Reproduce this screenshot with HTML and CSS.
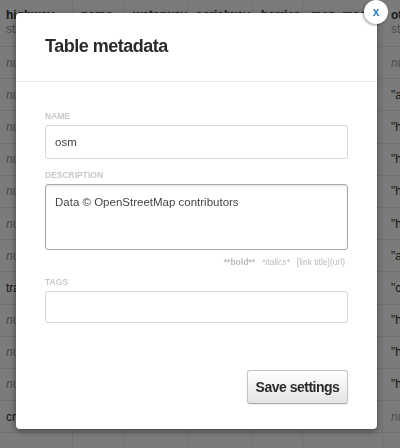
FILE: index.html
```html
<!DOCTYPE html>
<html>
<head>
<meta charset="utf-8">
<link rel="stylesheet" href="styles.css">
</head>
<body>
<div class="table">
  <div class="row head">
    <div class="cell first"><b>highway</b><span>string</span></div>
    <div class="cell"><b>name</b><span>string</span></div>
    <div class="cell"><b>waterway</b><span>string</span></div>
    <div class="cell"><b>aerialway</b><span>string</span></div>
    <div class="cell"><b>barrier</b><span>string</span></div>
    <div class="cell"><b>man_made</b><span>string</span></div>
    <div class="cell"><b>other_tags</b><span>string</span></div>
  </div>
  <div class="row"><div class="cell first nl">null</div><div class="cell nl">null</div><div class="cell nl">null</div><div class="cell nl">null</div><div class="cell nl">null</div><div class="cell nl">null</div><div class="cell nl">null</div></div>
  <div class="row"><div class="cell first nl">null</div><div class="cell nl">null</div><div class="cell nl">null</div><div class="cell nl">null</div><div class="cell nl">null</div><div class="cell nl">null</div><div class="cell">"amenity"=&gt;"bench"</div></div>
  <div class="row"><div class="cell first nl">null</div><div class="cell nl">null</div><div class="cell nl">null</div><div class="cell nl">null</div><div class="cell nl">null</div><div class="cell nl">null</div><div class="cell">"historic"=&gt;"ruins"</div></div>
  <div class="row"><div class="cell first nl">null</div><div class="cell nl">null</div><div class="cell nl">null</div><div class="cell nl">null</div><div class="cell nl">null</div><div class="cell nl">null</div><div class="cell">"historic"=&gt;"ruins"</div></div>
  <div class="row"><div class="cell first nl">null</div><div class="cell nl">null</div><div class="cell nl">null</div><div class="cell nl">null</div><div class="cell nl">null</div><div class="cell nl">null</div><div class="cell">"historic"=&gt;"ruins"</div></div>
  <div class="row"><div class="cell first nl">null</div><div class="cell nl">null</div><div class="cell nl">null</div><div class="cell nl">null</div><div class="cell nl">null</div><div class="cell nl">null</div><div class="cell">"historic"=&gt;"ruins"</div></div>
  <div class="row"><div class="cell first nl">null</div><div class="cell nl">null</div><div class="cell nl">null</div><div class="cell nl">null</div><div class="cell nl">null</div><div class="cell nl">null</div><div class="cell">"amenity"=&gt;"bench"</div></div>
  <div class="row"><div class="cell first">track</div><div class="cell nl">null</div><div class="cell nl">null</div><div class="cell nl">null</div><div class="cell nl">null</div><div class="cell nl">null</div><div class="cell">"created_by"=&gt;"JOSM"</div></div>
  <div class="row"><div class="cell first nl">null</div><div class="cell nl">null</div><div class="cell nl">null</div><div class="cell nl">null</div><div class="cell nl">null</div><div class="cell nl">null</div><div class="cell">"historic"=&gt;"ruins"</div></div>
  <div class="row"><div class="cell first nl">null</div><div class="cell nl">null</div><div class="cell nl">null</div><div class="cell nl">null</div><div class="cell nl">null</div><div class="cell nl">null</div><div class="cell">"historic"=&gt;"ruins"</div></div>
  <div class="row"><div class="cell first nl">null</div><div class="cell nl">null</div><div class="cell nl">null</div><div class="cell nl">null</div><div class="cell nl">null</div><div class="cell nl">null</div><div class="cell">"historic"=&gt;"ruins"</div></div>
  <div class="row"><div class="cell first">crossing</div><div class="cell nl">null</div><div class="cell nl">null</div><div class="cell nl">null</div><div class="cell nl">null</div><div class="cell nl">null</div><div class="cell nl">null</div></div>
  <div class="row"><div class="cell first"></div><div class="cell"></div><div class="cell"></div><div class="cell"></div><div class="cell"></div><div class="cell"></div><div class="cell"></div></div>
</div>

<div class="overlay"></div>

<div class="modal">
  <button class="close" type="button">x</button>
  <div class="modal-head"><h2 class="title">Table metadata</h2></div>
  <div class="modal-body">
    <label class="label">Name</label>
    <input class="field name" type="text" value="osm">
    <label class="label gap">Description</label>
    <textarea class="field desc">Data © OpenStreetMap contributors</textarea>
    <div class="hint"><b>**bold**</b><i>*italics*</i><span>[link title](url)</span></div>
    <label class="label gap2">Tags</label>
    <input class="field tags" type="text" value="">
  </div>
  <div class="modal-foot">
    <button class="save" type="button">Save settings</button>
  </div>
</div>
</body>
</html>
```
FILE: styles.css
```css
* { box-sizing: border-box; }
html, body {
  margin: 0;
  padding: 0;
  width: 400px;
  height: 448px;
  overflow: hidden;
}
body {
  background: #f6f6f6;
  font-family: "Liberation Sans", Arial, Helvetica, sans-serif;
  color: #333;
  position: relative;
}

/* background table */
.table {
  display: flex;
  flex-direction: column;
}
.row {
  display: grid;
  grid-template-columns: 73px 52px 63px 65px 50px 80px 1fr;
  height: 32.2px;
  border-bottom: 1px solid #e2e2e2;
}
.row.head {
  height: 47px;
}
.cell {
  border-right: 1px solid #e2e2e2;
  padding: 0 8px;
  font-size: 12px;
  white-space: nowrap;
  overflow: hidden;
  display: flex;
  align-items: center;
  color: #333;
}
.cell:last-child { border-right: none; }
.cell.first { padding-left: 6px; }
.cell.nl { font-style: italic; color: #999; }
.head .cell {
  flex-direction: column;
  align-items: flex-start;
  justify-content: flex-start;
  padding-top: 8px;
  line-height: 14px;
}
.head .cell b { font-size: 12px; color: #333; }
.head .cell span { font-size: 12px; color: #999; }

.overlay {
  position: fixed;
  inset: 0;
  background: rgba(0, 0, 0, 0.5);
}

/* modal */
.modal {
  position: absolute;
  left: 16px;
  top: 13px;
  width: 361px;
  height: 416px;
  background: #fff;
  border-radius: 4px;
  box-shadow: 0 2px 6px rgba(0, 0, 0, 0.45);
  display: flex;
  flex-direction: column;
}
.close {
  position: absolute;
  left: 348px;
  top: -13px;
  width: 24px;
  height: 24px;
  border-radius: 50%;
  border: none;
  background: #fff;
  box-shadow: -1px 1px 3px rgba(0, 0, 0, 0.4);
  color: #2d80c4;
  font-family: "Liberation Sans", Arial, sans-serif;
  font-size: 12px;
  font-weight: bold;
  line-height: 22px;
  padding: 0;
  text-align: center;
}
.modal-head {
  height: 69px;
  border-bottom: 1px solid #ececec;
  padding: 0 29px 2px;
  display: flex;
  align-items: center;
}
.title {
  margin: 0;
  font-size: 18px;
  font-weight: bold;
  letter-spacing: -0.5px;
  color: #2b2b2b;
}
.modal-body {
  padding: 29px 29px 0;
  display: flex;
  flex-direction: column;
}
.label {
  display: block;
  font-size: 8.5px;
  line-height: 10px;
  font-weight: bold;
  text-transform: uppercase;
  color: #c8c8c8;
  margin-bottom: 4px;
}
.label.gap { margin-top: 11px; }
.label.gap2 { margin-top: 9px; }
.field {
  display: block;
  width: 303px;
  margin: 0;
  font-family: "Liberation Sans", Arial, sans-serif;
  font-size: 11.5px;
  color: #444;
  border: 1px solid #d6d6d6;
  border-radius: 3px;
  background: #fff;
  padding: 0 9px;
  outline: none;
}
.name { height: 34px; }
.tags { height: 32px; }
.desc {
  height: 66px;
  resize: none;
  padding: 10px 9px;
  line-height: 14px;
  border-color: #a9a9a9;
  box-shadow: inset 0 1px 2px rgba(0, 0, 0, 0.12);
}
.hint {
  display: flex;
  justify-content: flex-end;
  gap: 7px;
  padding-right: 3px;
  margin-top: 6px;
  font-size: 8.5px;
  line-height: 12px;
  color: #bbb;
}
.hint b { font-weight: bold; }
.modal-foot {
  margin-top: auto;
  padding: 0 29px 25px;
  display: flex;
  justify-content: flex-end;
}
.save {
  width: 101px;
  height: 34px;
  border: 1px solid #c4c4c4;
  border-bottom-color: #ababab;
  border-radius: 3px;
  background: linear-gradient(#ffffff, #e4e4e4);
  box-shadow: 0 1px 2px rgba(0, 0, 0, 0.08);
  font-family: "Liberation Sans", Arial, sans-serif;
  font-size: 14px;
  font-weight: bold;
  letter-spacing: -0.5px;
  color: #2b2b2b;
  padding: 0;
}
```
